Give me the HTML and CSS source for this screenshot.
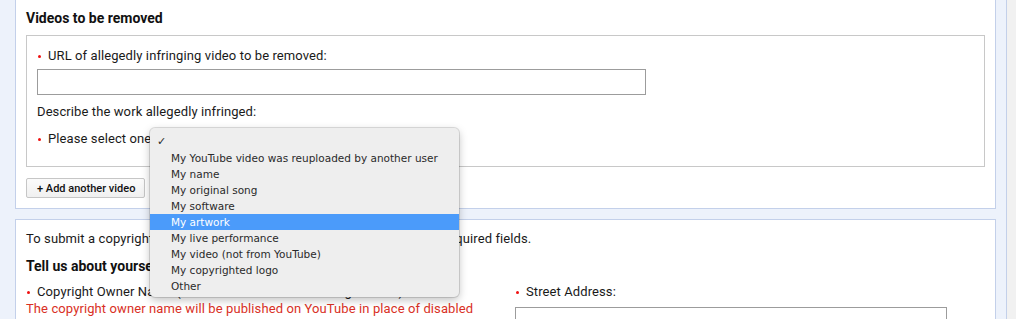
FILE: index.html
```html
<!DOCTYPE html>
<html lang="en">
<head>
    <meta charset="UTF-8">
    <meta name="viewport" content="width=device-width, initial-scale=1.0">
    <title>Copyright Complaint</title>
    <link rel="stylesheet" href="styles.css">
</head>
<body>
    <div class="page">
        <div class="card card-top">
            <h3 class="section-title">Videos to be removed</h3>

            <div class="video-box">
                <label class="required" for="video_url">URL of allegedly infringing video to be removed:</label>
                <input type="text" id="video_url" class="text-input url-input">

                <p class="plain-label">Describe the work allegedly infringed:</p>

                <div class="select-row">
                    <span class="required">Please select one</span>
                    <!-- native select popup, drawn open -->
                    <ul class="select-menu">
                        <li class="checked">&#10003;</li>
                        <li>My YouTube video was reuploaded by another user</li>
                        <li>My name</li>
                        <li>My original song</li>
                        <li>My software</li>
                        <li class="active">My artwork</li>
                        <li>My live performance</li>
                        <li>My video (not from YouTube)</li>
                        <li>My copyrighted logo</li>
                        <li>Other</li>
                    </ul>
                </div>
            </div>

            <button class="add-btn">+ Add another video</button>
        </div>

        <div class="card">
            <p class="intro">To submit a copyright infringement notification, please fill out all of the required fields.</p>
            <h3 class="section-title">Tell us about yourself</h3>

            <div class="two-col">
                <div class="col">
                    <label class="required" for="owner_name">Copyright Owner Name (YouTube username or full legal name):</label>
                    <p class="warn">The copyright owner name will be published on YouTube in place of disabled content.</p>
                </div>
                <div class="col">
                    <label class="required" for="street">Street Address:</label>
                    <input type="text" id="street" class="text-input street-input">
                </div>
            </div>
        </div>
    </div>
</body>
</html>
```

FILE: styles.css
```css
body {
    margin: 0;
    background: #f1f1f1;
    font-family: Roboto, Arial, sans-serif;
    font-size: 13px;
    letter-spacing: 0.1px;
    color: #1a1a1a;
    overflow: hidden;
}
.page {
    width: 1007px;
    box-sizing: border-box;
    background: #edf2fb;
    border-right: 1px solid #c3d0ea;
    padding: 0 10px 0 15px;
    min-height: 400px;
}
.card {
    background: #fff;
    border: 1px solid #c3d0ea;
    padding: 11px 10px 10px;
    margin-top: 10px;
}
.card-top {
    border-top: none;
    margin-top: 0;
    padding-top: 10px;
}
.section-title {
    margin: 0;
    font-size: 14px;
    font-weight: bold;
    line-height: 16px;
    letter-spacing: 0;
    color: #111;
}
.video-box {
    position: relative;
    margin-top: 9px;
    border: 1px solid #c8c8c8;
    padding: 12px 10px 19px;
}
label {
    display: block;
    line-height: 16px;
}
.required::before {
    content: "";
    display: inline-block;
    width: 3px;
    height: 3px;
    border-radius: 50%;
    background: #f01010;
    vertical-align: middle;
    margin: 0 7px 0 1px;
}
.text-input {
    display: block;
    box-sizing: border-box;
    height: 26px;
    border: 1px solid #9c9c9c;
    margin: 5px 0 0;
    padding: 2px 4px;
}
.url-input {
    width: 609px;
}
.plain-label {
    margin: 9px 0 0;
    line-height: 16px;
}
.select-row {
    position: relative;
    margin-top: 11px;
    line-height: 16px;
}
.select-menu {
    position: absolute;
    left: 113px;
    top: -3px;
    z-index: 10;
    width: 309px;
    margin: 0;
    padding: 6px 0 3px;
    list-style: none;
    background: #eeeeee;
    border-radius: 5px;
    box-shadow: 0 0 0 1px rgba(0, 0, 0, 0.12), 0 3px 8px rgba(0, 0, 0, 0.25);
    font-family: "DejaVu Sans", sans-serif;
    font-size: 10.5px;
    letter-spacing: 0;
    color: #2a2a2a;
}
.select-menu li {
    height: 16px;
    line-height: 16px;
    padding-left: 21px;
    white-space: nowrap;
}
.select-menu li.checked {
    padding-left: 7px;
    font-size: 11px;
}
.select-menu li.active {
    background: #4b9bfa;
    color: #fff;
}
.add-btn {
    display: block;
    margin-top: 11px;
    height: 20px;
    padding: 0 9px 0 10px;
    font-family: Roboto, Arial, sans-serif;
    font-size: 11px;
    font-weight: 500;
    letter-spacing: 0;
    color: #111;
    background: linear-gradient(#fbfbfb, #f0f0f0);
    border: 1px solid #c6c6c6;
    border-radius: 2px;
}
.intro {
    margin: 0 0 11px;
    line-height: 16px;
}
.two-col {
    display: grid;
    grid-template-columns: 470px 470px;
    column-gap: 19px;
    margin-top: 10px;
}
.warn {
    margin: 0;
    line-height: 17px;
    color: #d93025;
}
.street-input {
    width: 432px;
    margin-top: 7px;
}
```
